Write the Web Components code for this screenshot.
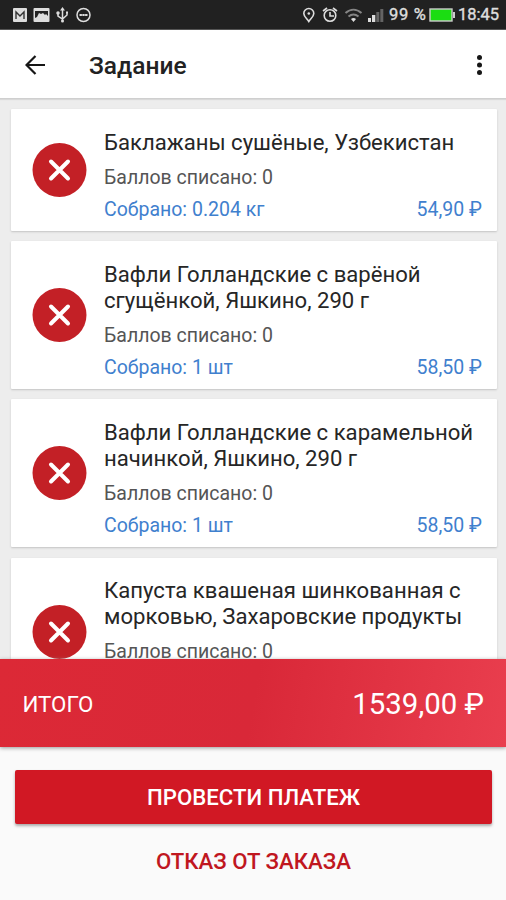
<!DOCTYPE html>
<html lang="ru"><head><meta charset="utf-8"><title>Задание</title>
<style>html,body{margin:0;height:900px;overflow:hidden;background:#fafafa;font-family:Roboto,"Noto Sans",sans-serif}</style></head>
<body><task-screen></task-screen>
<script>
const define = (name, html) => customElements.define(name, class extends HTMLElement {
  constructor() {
    super();
    const t = document.createElement('template');
    t.innerHTML = html;
    this.attachShadow({ mode: 'open' }).append(t.content.cloneNode(true));
  }
});

define('status-bar', `<style>
:host{display:flex;align-items:center;height:30px;box-sizing:border-box;padding:0 7px 0 13px;background:#212121;color:#ddd;font-size:16.5px;line-height:32px;border-bottom:1px solid #555}
svg{display:block;flex:none}.gap{flex:1}
.pct{margin-left:3px;width:40px;letter-spacing:.7px;white-space:nowrap;-webkit-text-stroke:.4px #ddd}.time{margin-left:3px;width:41px;white-space:nowrap;-webkit-text-stroke:.4px #ddd}
</style>
<svg width="80" height="30" fill="none" stroke="#ddd" stroke-width="1.5">
<rect x="0" y="8" width="14" height="14" rx="1" fill="#ddd" stroke="none"/><path d="M3 19v-7l4 4 4-4v7" stroke="#333" stroke-width="1.4"/>
<rect x="20.500" y="8" width="16" height="14" rx="1" fill="#ddd" stroke="none"/><path d="M22 18v-7h13v5l-2-2-1 1-2-2-2 1-2-1-2 4z" fill="#222" stroke="none"/>
<path d="M49.500 9v12M45 13v3l4.500 3 4.500-4v-3"/><path d="M47 10.500 49.500 7l2.500 3.500z" fill="#ddd" stroke="none"/><circle cx="49.500" cy="21" r="1.500" fill="#ddd" stroke="none"/><circle cx="45" cy="13" r="1" fill="#ddd"/><path d="M53 11.500h2v2h-2z" fill="#ddd" stroke="none"/>
<circle cx="70.500" cy="15" r="6.500"/><path d="M66.500 15h8" stroke-width="2" stroke-dasharray="2.400 .4"/>
</svg><span class="gap"></span>
<svg width="82" height="30" fill="none" stroke="#ddd" stroke-width="1.600" style="margin-right:1px;margin-left:-3px">
<path d="M5 21.500c-2-3-5-5-5-8a5 5 0 0 1 10 0c0 3-3 5-5 8z" transform="translate(.8)"/><circle cx="5.800" cy="13.500" r="1.300" fill="#ddd" stroke="none"/>
<circle cx="27" cy="15.500" r="5.800"/><path d="m20 11 4-3M34 11l-4-3M27 12v4h4"/>
<g stroke="#858585" stroke-width="2"><path d="M42.500 13c5-4.500 11-4.500 16 0M45.500 16.500c3-2.500 7-2.500 10 0"/></g><path d="m48 19 2.500 3 2.500-3q-2.500-2-5 0z" fill="#ddd" stroke="none"/>
<path d="M65 18h3v4h-3zM69 15h3.300v7H69z" fill="#ddd" stroke="none"/><path d="M73.300 12h3v10h-3zM77.300 9h3v13h-3z" fill="#646464" stroke="none"/>
</svg><span class="pct">99 %</span>
<svg width="26" height="30"><rect x="1" y="9" width="22" height="12" fill="#1bdd12" stroke="#ccc" stroke-width="1.400"/><path d="M24 12h2v6h-2z" fill="#ccc"/></svg><span class="time">18:45</span>`);

define('app-bar', `<style>
:host{display:flex;align-items:center;height:69px;box-sizing:border-box;padding:0 22px 0 25px;background:#fff;border-bottom:1px solid #cfcfcf;box-shadow:0 1px 1px #d9d9d9;position:relative}
h1{margin:3px auto 0 44px;font-size:24.500px;line-height:32px;font-weight:500;color:#222}svg{display:block}
.back{margin-top:1px}.dots{margin-top:1px}
</style><svg class="back" width="20" height="20" fill="none" stroke="#161616" stroke-width="2.200"><path d="M20 10H2M10.500 1 1.500 10l9 9"/></svg>
<h1><slot></slot></h1><svg class="dots" width="9" height="22" fill="#161616"><circle cx="4.500" cy="3.500" r="2.500"/><circle cx="4.500" cy="11" r="2.500"/><circle cx="4.500" cy="18.500" r="2.500"/></svg>`);

define('item-card', `<style>
:host{display:flex;align-items:center;flex:none;box-sizing:border-box;height:148px;padding:0 15px 0 21px;background:#fff;border-radius:1px;box-shadow:0 1px 2px #c4c4c4}
:host([single]){height:122px}
svg{display:block;flex:none;margin-right:17.500px}
.body{flex:1;min-width:0;padding-top:10.800px}
.name{font-size:22.120px;line-height:26px;color:#262626;white-space:nowrap}
.sub{font-size:19.500px;line-height:24px;color:#555;margin-top:11px}
.row{display:flex;justify-content:space-between;min-height:24px;font-size:19.500px;line-height:24px;color:#3f80ce;margin-top:8px}
</style><svg width="55" height="54"><circle cx="27.500" cy="27" r="27" fill="#c32026"/><path d="m19 18.500 17 17m0-17-17 17" stroke="#fff" stroke-width="4" stroke-linecap="round"/></svg>
<div class="body"><div class="name"><slot></slot></div><div class="sub">Баллов списано: 0</div><div class="row"><slot name="got"></slot><slot name="price"></slot></div></div>`);

define('total-bar', `<style>
:host{display:flex;align-items:center;justify-content:space-between;height:88px;padding:2px 22px 0 22.500px;box-sizing:border-box;background:linear-gradient(100deg,#dc2936 0%,#d92838 50%,#e93e4e 100%);color:#fff;box-shadow:0 1px 4px #999;position:relative}
.label{font-size:22.300px}.sum{font-size:29.400px}
</style><span class="label"><slot name="label"></slot></span><span class="sum"><slot></slot></span>`);

define('action-button', `<style>
:host{display:block;height:54px;line-height:55px;text-align:center;font-size:22.200px;font-weight:500;color:#c0171f}
:host([primary]){background:#d11824;color:#fff;border-radius:2px;box-shadow:0 2px 3px #aaa}
</style><slot></slot>`);

define('task-screen', `<style>
:host{display:flex;flex-direction:column;height:900px;width:506px;overflow:hidden}
.list{display:flex;flex-direction:column;gap:10.200px;height:560px;box-sizing:border-box;padding:10px 9px 0 10.500px;overflow:hidden;background:#ededed}
.actions{display:flex;flex-direction:column;gap:10px;padding:23px 14px 0 15px}
</style><status-bar></status-bar><app-bar>Задание</app-bar>
<div class="list">
<item-card single>Баклажаны сушёные, Узбекистан<span slot="got">Собрано: 0.204 кг</span><span slot="price">54,90 ₽</span></item-card>
<item-card>Вафли Голландские с варёной<br>сгущёнкой, Яшкино, 290 г<span slot="got">Собрано: 1 шт</span><span slot="price">58,50 ₽</span></item-card>
<item-card>Вафли Голландские с карамельной<br>начинкой, Яшкино, 290 г<span slot="got">Собрано: 1 шт</span><span slot="price">58,50 ₽</span></item-card>
<item-card>Капуста квашеная шинкованная с<br>морковью, Захаровские продукты</item-card>
</div>
<total-bar><span slot="label">ИТОГО</span>1539,00 ₽</total-bar>
<div class="actions"><action-button primary>ПРОВЕСТИ ПЛАТЕЖ</action-button><action-button>ОТКАЗ ОТ ЗАКАЗА</action-button></div>`);
</script></body></html>
